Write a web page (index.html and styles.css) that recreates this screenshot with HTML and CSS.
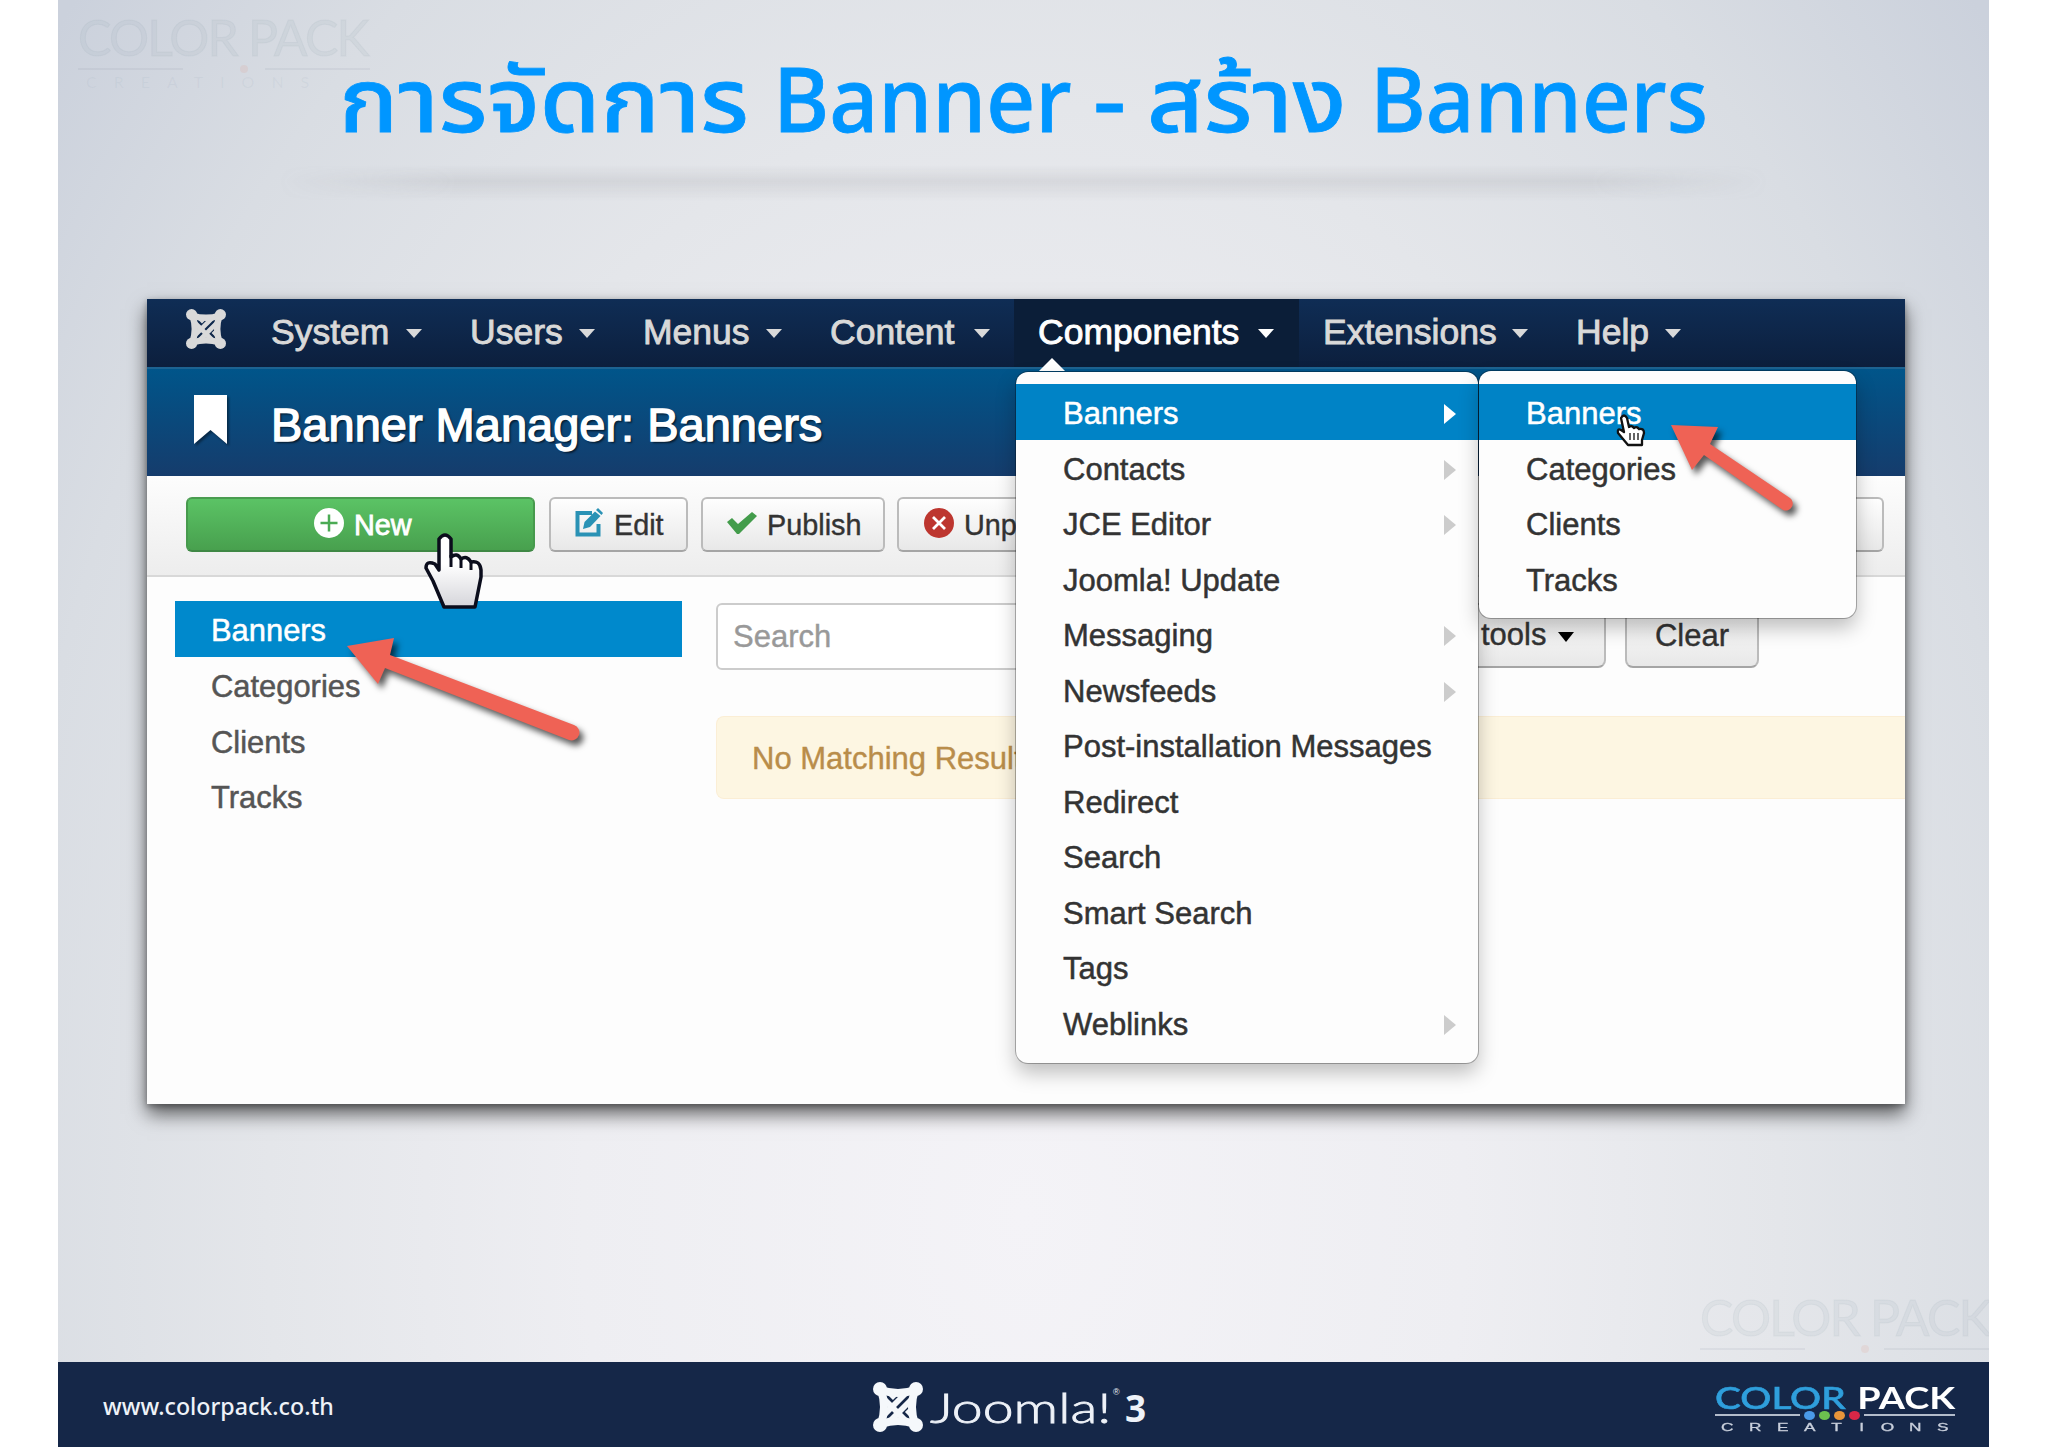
FILE: index.html
```
<!DOCTYPE html>
<html lang="th">
<head>
    <meta charset="UTF-8">
    <meta name="viewport" content="width=device-width, initial-scale=1.0">
    <title>การจัดการ Banner - สร้าง Banners</title>
    <link rel="stylesheet" href="styles.css">
</head>
<body>
    <!-- Shared symbols -->
    <svg class="symbols" width="0" height="0">
        <symbol id="joomla" viewBox="0 0 50 50">
            <g fill="none" stroke="currentColor" stroke-width="8">
                <path d="M8 8Q14 25 8 42"/>
                <path d="M42 8Q36 25 42 42"/>
                <path d="M8 8Q25 14 42 8"/>
                <path d="M8 42Q25 36 42 42"/>
            </g>
            <g stroke="currentColor" stroke-width="5.8">
                <path d="M11 33L33 11M17 39L39 17"/>
                <path d="M17 11L22 16M34 28L39 33M11 17L33 39"/>
            </g>
            <g fill="currentColor">
                <circle cx="7" cy="7" r="7"/>
                <circle cx="43" cy="7" r="7"/>
                <circle cx="7" cy="43" r="7"/>
                <circle cx="43" cy="43" r="7"/>
            </g>
        </symbol>
    </svg>

    <div class="slide">
        <div class="watermark watermark-top">
            <div class="wm-name">COLOR <b>PACK</b></div>
            <div class="wm-rule"><i></i><em></em><i></i></div>
            <div class="wm-sub">CREATIONS</div>
        </div>

        <h1 class="slide-title"><span class="t1">การจัดการ</span><span class="t2">Banner</span><span class="t3">-</span><span class="t4">สร้าง</span><span class="t5">Banners</span></h1>
        <div class="title-shadow"></div>

        <div class="panel">
            <nav class="navbar">
                <svg class="brand"><use href="#joomla"/></svg>
                <ul class="nav">
                    <li class="system">System<span class="caret"></span></li>
                    <li class="users">Users<span class="caret"></span></li>
                    <li class="menus">Menus<span class="caret"></span></li>
                    <li class="articles">Content<span class="caret"></span></li>
                    <li class="components open">Components<span class="caret"></span>
                        <ul class="dropdown">
                            <li class="active sub">Banners
                                <ul class="dropdown submenu">
                                    <li class="active">Banners</li>
                                    <li>Categories</li>
                                    <li>Clients</li>
                                    <li>Tracks</li>
                                </ul>
                            </li>
                            <li class="sub">Contacts</li>
                            <li class="sub">JCE Editor</li>
                            <li>Joomla! Update</li>
                            <li class="sub">Messaging</li>
                            <li class="sub">Newsfeeds</li>
                            <li>Post-installation Messages</li>
                            <li>Redirect</li>
                            <li>Search</li>
                            <li>Smart Search</li>
                            <li>Tags</li>
                            <li class="sub">Weblinks</li>
                        </ul>
                    </li>
                    <li class="extensions">Extensions<span class="caret"></span></li>
                    <li class="help">Help<span class="caret"></span></li>
                </ul>
            </nav>

            <header class="page-header">
                <svg class="bookmark" viewBox="0 0 33 49"><path d="M0 0H33V49L16.500 35L0 49Z" fill="#fff"/></svg>
                <h2>Banner Manager: Banners</h2>
            </header>

            <div class="toolbar">
                <button class="btn btn-new">
                    <svg width="30" height="30" viewBox="0 0 30 30"><circle cx="15" cy="15" r="15" fill="#fff"/><path d="M15 6.500V23.500M6.500 15H23.500" stroke="#4bab54" stroke-width="2.500"/></svg>
                    New
                </button>
                <button class="btn btn-edit">
                    <svg width="28" height="28" viewBox="0 0 28 28"><path d="M17 4H2.500V25.500H23.500V15" fill="none" stroke="#2a92b5" stroke-width="4"/><path d="M8 20L9.500 13L20 2.500L25.500 7L15 18Z" fill="#2a92b5"/><path d="M21 1L23 -1L28 4L26.500 6Z" fill="#2a92b5"/></svg>
                    Edit
                </button>
                <button class="btn btn-publish">
                    <svg width="30" height="22" viewBox="0 0 30 22"><path d="M0 10L5 6L11 12L25 0L30 4L12 22H10Z" fill="#439c4b"/></svg>
                    Publish
                </button>
                <button class="btn btn-unpublish">
                    <svg width="30" height="30" viewBox="0 0 30 30"><circle cx="15" cy="15" r="15" fill="#bd362f"/><path d="M9 9L21 21M21 9L9 21" stroke="#fff" stroke-width="2.800"/></svg>
                    Unpublish
                </button>
                <button class="btn btn-options"></button>
            </div>

            <div class="content">
                <ul class="sidebar">
                    <li class="active">Banners</li>
                    <li>Categories</li>
                    <li>Clients</li>
                    <li>Tracks</li>
                </ul>
                <div class="main">
                    <div class="filters">
                        <input class="search" type="text" placeholder="Search">
                        <button class="filter-btn tools">tools<span class="caret"></span></button>
                        <button class="filter-btn clear">Clear</button>
                    </div>
                    <div class="alert">No Matching Results</div>
                </div>
            </div>
        </div>

        <footer class="footer">
            <div class="site">www.colorpack.co.th</div>
            <div class="joomla-logo">
                <svg><use href="#joomla"/></svg>
                <span class="word">Joomla!</span><sup>®</sup><b>3</b>
            </div>
            <div class="colorpack">
                <div class="cp-name"><span>COLOR</span><b>PACK</b></div>
                <div class="cp-rule"><i></i><span class="dot blue"></span><span class="dot green"></span><span class="dot orange"></span><span class="dot red"></span><i></i></div>
                <div class="cp-sub"><span>C</span><span>R</span><span>E</span><span>A</span><span>T</span><span>I</span><span>O</span><span>N</span><span>S</span></div>
            </div>
        </footer>

        <div class="watermark watermark-bottom">
            <div class="wm-name">COLOR <b>PACK</b></div>
            <div class="wm-rule"><i></i><em></em><i></i></div>
        </div>

        <!-- Pointers and arrows over the panel -->
        <svg class="overlay" viewBox="58 0 1931 1447">
            <defs>
                <linearGradient id="hand-fill" x1="0" y1="0" x2="0" y2="1">
                    <stop offset="0.4" stop-color="#fff"/>
                    <stop offset="1" stop-color="#d5d5da"/>
                </linearGradient>
            </defs>
            <g class="arrow">
                <path d="M347 646L394 638L390 655L574 725A7 7 0 0 1 569 740L385 668L378 684Z"/>
                <path d="M1671 425L1718 427L1710 444L1790 498A7 7 0 0 1 1783 510L1704 455L1692 470Z"/>
            </g>
            <path d="M439 539Q445 531 451 539V557Q457 552 461 559Q467 555 471 562Q480 560 481 570V577L475 607H444L433 581L426 568Q426 560 435 564L439 570Z" fill="url(#hand-fill)" stroke="#0b0d1c" stroke-width="3.500" stroke-linejoin="round"/>
            <path d="M451 555V567M461 559V568M471 562V570" stroke="#0b0d1c" stroke-width="3" fill="none"/>
            <path d="M1621 418Q1624 413 1627 418L1629 427Q1632 425 1634 428Q1637 426 1639 429Q1644 428 1644 433L1642 440V445H1628L1618 433Q1617 428 1621 430L1624 432Z" fill="#fff" stroke="#111" stroke-width="2.300" stroke-linejoin="round"/>
            <path d="M1630 433V440M1634 433V440M1638 433V440" stroke="#111" stroke-width="1.300"/>
        </svg>
    </div>
</body>
</html>
```

FILE: styles.css
```
* {
    margin: 0;
    padding: 0;
    box-sizing: border-box;
}

body {
    background-color: #fff;
    font-family: "Liberation Sans", Arial, sans-serif;
    color: #333;
    overflow: hidden;
}

ul {
    list-style: none;
}

.symbols {
    display: block;
}

.slide {
    position: relative;
    display: flex;
    flex-direction: column;
    width: 1931px;
    height: 1447px;
    margin-left: 58px;
    overflow: hidden;
    background: radial-gradient(ellipse 1260px 1850px at 50% 84%, #f4f3f7 0%, #eeeef2 35%, #e4e6ea 60%, #d9dde3 82%, #cbd1dc 100%);
}

/* Title */
.slide-title {
    display: flex;
    height: 165px;
    padding: 44px 0 0 281px;
    font-family: "Noto Sans Thai", "Noto Sans", sans-serif;
    font-size: 89.5px;
    font-weight: 500;
    line-height: 122px;
    color: #0096ff;
    white-space: nowrap;
    -webkit-text-stroke: 0.8px #0096ff;
}

.slide-title span {
    flex: none;
    transform-origin: 0 0;
}

.t1 {
    width: 434px;
    transform: scaleX(1.09);
}

.t2 {
    width: 320px;
    transform: scaleX(0.957);
}

.t3 {
    width: 54px;
    transform: scaleX(1.15);
}

.t4 {
    width: 223px;
    transform: scaleX(1.09);
}

.t5 {
    transform: scaleX(0.951);
}

.title-shadow {
    height: 36px;
    margin: 0 220px;
    background: linear-gradient(transparent, rgba(110, 110, 118, 0.12) 45%, rgba(110, 110, 118, 0.07) 70%, transparent);
    -webkit-mask-image: linear-gradient(to right, transparent, #000 12%, #000 88%, transparent);
    mask-image: linear-gradient(to right, transparent, #000 12%, #000 88%, transparent);
}

/* Admin panel */
.panel {
    width: 1758px;
    height: 805px;
    margin: 98px 0 0 89px;
    background-color: #fdfdfd;
    box-shadow: 0 10px 18px rgba(0, 0, 0, 0.6), 0 2px 6px rgba(0, 0, 0, 0.3);
}

.navbar {
    display: flex;
    height: 68px;
    padding-left: 39px;
    background: linear-gradient(#0f2d55, #0c1f3d);
}

.brand {
    width: 40px;
    height: 40px;
    margin: 10px 21px 0 0;
    color: #d9d9d9;
}

.nav {
    display: flex;
}

.nav > li {
    position: relative;
    display: flex;
    flex: none;
    align-items: center;
    justify-content: space-between;
    height: 68px;
    padding: 0 24px 2px;
    font-size: 35.5px;
    color: #d9d9d9;
    -webkit-text-stroke: 0.9px;
    text-shadow: 0 -1px 0 rgba(0, 0, 0, 0.3);
}

.system { width: 199px; }
.users { width: 173px; }
.menus { width: 187px; }
.articles { width: 208px; }
.components { width: 285px; }
.extensions { width: 253px; }
.help { width: 153px; }

.nav > li.open {
    background-color: #0b1e38;
    color: #fff;
}

.caret {
    margin-top: 3px;
    border-top: 9px solid currentColor;
    border-left: 8.5px solid transparent;
    border-right: 8.5px solid transparent;
}

.nav > li.open .caret {
    margin-right: 1px;
}

.nav > li.open::after {
    content: "";
    position: absolute;
    left: 25px;
    top: 59px;
    border-bottom: 13px solid #fff;
    border-left: 13px solid transparent;
    border-right: 13px solid transparent;
}

.dropdown {
    position: absolute;
    z-index: 2;
    left: 2px;
    top: 73px;
    width: 462px;
    padding: 12px 0 13px;
    background-color: #fdfdfd;
    border-radius: 12px;
    box-shadow: 0 0 0 1px rgba(0, 0, 0, 0.28), 0 10px 20px rgba(0, 0, 0, 0.25);
    -webkit-text-stroke: 0.5px;
    text-shadow: none;
}

.dropdown li {
    position: relative;
    height: 55.5px;
    padding-left: 47px;
    font-size: 31px;
    line-height: 59px;
    color: #333;
    white-space: nowrap;
}

.dropdown li.active {
    background-color: #0083c6;
    color: #fff;
}

.dropdown li.sub::after {
    content: "";
    position: absolute;
    right: 22px;
    top: 20px;
    border-left: 12px solid #ccc;
    border-top: 10.5px solid transparent;
    border-bottom: 10.5px solid transparent;
}

.dropdown li.active.sub::after {
    border-left-color: #fff;
}

.submenu {
    left: 463px;
    top: -13px;
    width: 377px;
    padding: 13px 0 12px;
}

.page-header {
    display: flex;
    height: 109px;
    padding-left: 47px;
    border-top: 2px solid #1d6391;
    background: linear-gradient(#00558a, #153c6c);
}

.bookmark {
    width: 33px;
    height: 49px;
    margin: 26px 44px 0 0;
    filter: drop-shadow(2px 2px 1px rgba(0, 0, 0, 0.4));
}

.page-header h2 {
    font-size: 47px;
    font-weight: normal;
    line-height: 54px;
    margin-top: 29px;
    color: #fff;
    -webkit-text-stroke: 1.4px #fff;
    text-shadow: 2px 2px 2px rgba(0, 0, 0, 0.6);
}

.toolbar {
    display: flex;
    height: 101px;
    padding: 21px 21px 0 39px;
    border-bottom: 2px solid #d8d8d8;
    background: linear-gradient(#fdfdfd, #ededed);
}

.btn,
.filter-btn {
    display: flex;
    align-items: center;
    flex: none;
    font-family: inherit;
    color: #333;
    border: 2px solid #bbb;
    border-bottom-color: #a5a5a5;
    border-radius: 6px;
    background: linear-gradient(#fefefe, #e8e8e8);
    white-space: nowrap;
    -webkit-text-stroke: 0.4px;
}

.btn {
    height: 55px;
    padding-top: 2px;
    font-size: 28.8px;
}

.btn svg {
    flex: none;
    margin-right: 10px;
    overflow: visible;
    position: relative;
    top: -3px;
}

.btn-new {
    width: 349px;
    margin-right: 14px;
    padding-left: 126px;
    color: #fff;
    border-color: #4a9c50 #479a4d #3f8845;
    background: linear-gradient(#5bc365, #48a04e);
    -webkit-text-stroke: 0.8px;
}

.btn-edit {
    width: 139px;
    margin-right: 13px;
    padding-left: 24px;
}

.btn-edit svg {
    margin-right: 11px;
}

.btn-publish {
    width: 184px;
    margin-right: 12px;
    padding-left: 24px;
}

.btn-unpublish {
    width: 215px;
    padding-left: 25px;
}

.btn-options {
    width: 120px;
    margin-left: auto;
}

.content {
    display: flex;
    padding: 24px 0 0 28px;
}

.sidebar {
    width: 507px;
    margin-right: 34px;
}

.sidebar li {
    height: 55.8px;
    padding-left: 36px;
    font-size: 30.9px;
    line-height: 59px;
    color: #555;
    -webkit-text-stroke: 0.5px;
}

.sidebar li.active {
    background-color: #0089cc;
    color: #fff;
}

.main {
    flex: 1;
}

.filters {
    display: flex;
    height: 67px;
    margin-top: 2px;
}

.search {
    width: 540px;
    height: 67px;
    padding: 0 15px;
    border: 2px solid #ccc;
    border-radius: 6px;
    font-family: inherit;
    font-size: 31px;
    background-color: #fff;
}

.search::placeholder {
    color: #999;
    -webkit-text-stroke: 0.4px;
}

.filter-btn {
    height: 65px;
    font-size: 31px;
    border-radius: 8px;
}

.tools {
    width: 180px;
    margin-left: 170px;
    padding: 0 28px 1px 53px;
}

.tools .caret {
    margin-left: 12px;
    border-top-width: 10px;
    border-top-color: #000;
}

.clear {
    width: 134px;
    margin-left: 19px;
    padding-top: 1px;
    justify-content: center;
}

.alert {
    height: 83px;
    margin-top: 46px;
    padding-left: 35px;
    border: 1px solid #fbeed5;
    border-right: none;
    border-radius: 8px 0 0 8px;
    background-color: #fdf6e2;
    font-size: 31px;
    line-height: 84px;
    color: #b98d4a;
    -webkit-text-stroke: 0.4px;
}

/* Footer */
.footer {
    display: flex;
    height: 85px;
    margin-top: auto;
    background-color: #152748;
    color: #eef2f8;
}

.site {
    width: 770px;
    padding: 28px 0 0 45px;
    font-family: "Noto Sans", sans-serif;
    font-size: 23.2px;
    font-weight: 500;
    line-height: 32px;
}

.joomla-logo {
    display: flex;
    width: 842px;
    padding: 20px 0 0 45px;
}

.joomla-logo svg {
    width: 50px;
    height: 50px;
    color: #f5f8fb;
}

.joomla-logo .word {
    width: 185px;
    margin-left: 7px;
    font-family: Lato, sans-serif;
    font-size: 41px;
    line-height: 51px;
    font-weight: 300;
    transform: scaleX(1.35);
    transform-origin: 0 0;
    -webkit-text-stroke: 0.8px;
}

.joomla-logo sup {
    width: 11px;
    margin-left: -2px;
    font-size: 9px;
    line-height: 20px;
}

.joomla-logo b {
    margin-left: 1px;
    font-family: "Noto Sans", sans-serif;
    font-size: 37px;
    line-height: 52px;
}

.colorpack {
    width: 240px;
    margin-left: 45px;
    padding-top: 19px;
}

.cp-name {
    display: flex;
    justify-content: space-between;
    height: 28px;
    font-family: Lato, sans-serif;
    font-size: 31px;
    line-height: 32px;
}

.cp-name span {
    color: #2f9fdc;
    font-weight: 500;
    transform: scaleX(1.25);
    transform-origin: 0 0;
    -webkit-text-stroke: 0.6px;
}

.cp-name b {
    color: #fff;
    transform: scaleX(1.22);
    transform-origin: 100% 0;
}

.cp-rule {
    display: flex;
    align-items: center;
    justify-content: space-between;
    height: 12px;
}

.cp-rule i {
    width: 85px;
    height: 2px;
    background-color: #b3bccb;
}

.cp-rule i:last-child {
    width: 91px;
}

.dot {
    width: 11px;
    height: 9px;
    border-radius: 50%;
}

.blue { background-color: #4a9ae8; }
.green { background-color: #6cc04f; }
.orange { background-color: #e8963a; }
.red { background-color: #d82747; }

.cp-sub {
    display: flex;
    justify-content: space-between;
    padding: 0 8px;
    font-size: 11.5px;
    line-height: 13px;
    color: #c9d0dc;
    -webkit-text-stroke: 0.3px;
}

.cp-sub span {
    transform: scaleX(1.5);
}

/* Faint brand marks in the corners */
.watermark {
    position: absolute;
    font-family: Lato, sans-serif;
    color: rgba(130, 150, 170, 0.09);
    white-space: nowrap;
}

.watermark-top {
    left: 20px;
    top: 9px;
    width: 292px;
}

.watermark-bottom {
    left: 1642px;
    top: 1289px;
    width: 289px;
}

.wm-name {
    font-size: 50px;
    line-height: 56px;
    letter-spacing: -1.8px;
    -webkit-text-stroke: 1px;
}

.wm-name b {
    font-weight: normal;
}

.wm-rule {
    display: flex;
    justify-content: space-between;
    align-items: center;
    height: 7px;
}

.wm-rule i {
    width: 105px;
    height: 2px;
    background-color: rgba(130, 140, 155, 0.11);
}

.wm-rule em {
    width: 8px;
    height: 8px;
    border-radius: 50%;
    margin-left: 40px;
    background-color: rgba(230, 130, 110, 0.12);
}

.wm-sub {
    padding-left: 8px;
    font-size: 16px;
    letter-spacing: 17px;
}

.overlay {
    position: absolute;
    z-index: 3;
    left: 0;
    top: 0;
    width: 1931px;
    height: 1447px;
    pointer-events: none;
}

.arrow {
    fill: #ef6255;
    filter: drop-shadow(4px 5px 3px rgba(0, 0, 0, 0.65));
}
```
